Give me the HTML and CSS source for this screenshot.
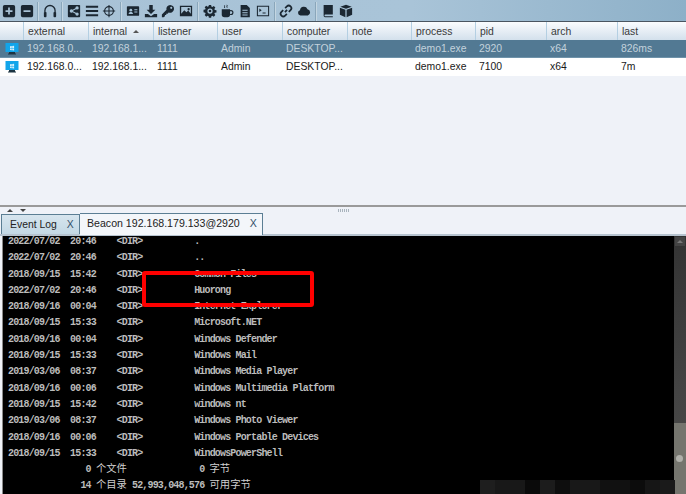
FILE: index.html
```html
<!DOCTYPE html>
<html lang="en">
<head>
  <meta charset="UTF-8" />
  <title>Cobalt Strike</title>
  <link rel="stylesheet" href="styles.css">
</head>
<body>
  <div class="toolbar">
    <span class="tool"><svg viewBox="0 0 16 16"><path d="M3 1h10a2 2 0 0 1 2 2v10a2 2 0 0 1-2 2H3a2 2 0 0 1-2-2V3a2 2 0 0 1 2-2zm4 3v3H4v2h3v3h2V9h3V7H9V4z" fill-rule="evenodd"/></svg></span>
    <span class="tool"><svg viewBox="0 0 16 16"><path d="M3 1h10a2 2 0 0 1 2 2v10a2 2 0 0 1-2 2H3a2 2 0 0 1-2-2V3a2 2 0 0 1 2-2zm1 6v2h8V7z" fill-rule="evenodd"/></svg></span>
    <span class="sep"></span>
    <span class="tool"><svg viewBox="0 0 16 16"><path d="M2.2 9.5V7.5a5.8 5.8 0 0 1 11.6 0v2" fill="none" stroke="#1b2732" stroke-width="1.5"/><rect x="1" y="9" width="3" height="6" rx="1"/><rect x="12" y="9" width="3" height="6" rx="1"/></svg></span>
    <span class="sep"></span>
    <span class="tool"><svg viewBox="0 0 16 16"><path d="M2 1h12a1 1 0 0 1 1 1v12a1 1 0 0 1-1 1H2a1 1 0 0 1-1-1V2a1 1 0 0 1 1-1z"/><path d="M11.5 4.5 5 8l6.500 3.500" fill="none" stroke="#a5c1d5" stroke-width="1.200"/><circle cx="11.500" cy="4.500" r="1.900" fill="#a5c1d5"/><circle cx="5" cy="8" r="1.900" fill="#a5c1d5"/><circle cx="11.500" cy="11.500" r="1.900" fill="#a5c1d5"/></svg></span>
    <span class="tool"><svg viewBox="0 0 16 16"><path d="M1 2h14v2.400H1zM1 6.800h14v2.400H1zM1 11.600h14V14H1z"/></svg></span>
    <span class="tool"><svg viewBox="0 0 16 16"><circle cx="8" cy="8" r="5" fill="none" stroke="#1b2732" stroke-width="1.300"/><path d="M7.400 1h1.200v14H7.400zM1 7.400h14v1.200H1z"/></svg></span>
    <span class="sep"></span>
    <span class="tool"><svg viewBox="0 0 16 16"><path d="M2 2.500h12a1 1 0 0 1 1 1v9a1 1 0 0 1-1 1H2a1 1 0 0 1-1-1v-9a1 1 0 0 1 1-1z"/><circle cx="5.500" cy="7" r="1.600" fill="#a5c1d5"/><path d="M3 11.500c0-3 5-3 5 0zM9.500 6H13v1.200H9.500zM9.500 8.500H13v1.200H9.500z" fill="#a5c1d5"/></svg></span>
    <span class="tool"><svg viewBox="0 0 16 16"><path d="M6 1h4v5.500h3L8 11.500 3 6.500h3zM1 11.500h3.500L8 14l3.500-2.500H15V15H1z"/></svg></span>
    <span class="tool"><svg viewBox="0 0 16 16"><path d="M10.500 1a4.500 4.500 0 1 1-1.700 8.700L7.500 11H6v1.500H4.500V14L3 15H1v-3l5.300-5.300A4.500 4.500 0 0 1 10.500 1zm1.200 2.200a1.200 1.200 0 1 0 0 2.400 1.200 1.200 0 0 0 0-2.400z" fill-rule="evenodd"/></svg></span>
    <span class="tool"><svg viewBox="0 0 16 16"><path d="M1 2h14v12H1zm1.500 1.500v7.500l3.500-4 2.500 2.500 2-2 3 3.500V3.500z" fill-rule="evenodd"/><circle cx="11" cy="6" r="1.300"/></svg></span>
    <span class="sep"></span>
    <span class="tool"><svg viewBox="0 0 16 16"><path d="M6.700 1h2.600l.3 1.900 1.100.5 1.600-1.100 1.800 1.800-1.100 1.600.5 1.100 1.900.3v2.600l-1.900.3-.5 1.100 1.100 1.600-1.800 1.800-1.600-1.100-1.100.5-.3 1.900H6.700l-.3-1.900-1.100-.5-1.600 1.100-1.800-1.800 1.100-1.600-.5-1.100L.6 9.300V6.700l1.900-.3.5-1.100-1.100-1.600 1.800-1.800 1.600 1.100 1.100-.5zM8 5a3 3 0 1 0 0 6 3 3 0 0 0 0-6z" fill-rule="evenodd"/><circle cx="8" cy="8" r="1.500"/></svg></span>
    <span class="tool"><svg viewBox="0 0 16 16"><path d="M2 6h9.500v6a3 3 0 0 1-3 3h-3.500a3 3 0 0 1-3-3z"/><path d="M11.500 7.500h1a1.800 1.800 0 0 1 0 4.500h-1" fill="none" stroke="#1b2732" stroke-width="1.300"/><path d="M5 1.500c1 .8-.6 1.600.4 3M7.800 1c1 .8-.6 1.700.4 3.200" fill="none" stroke="#1b2732" stroke-width="1.100"/></svg></span>
    <span class="tool"><svg viewBox="0 0 16 16"><path d="M3 1h7l3.500 3.500V15H3zm2 5.500v1.200h6V6.500zm0 2.800v1.200h6V9.300zm0 2.700v1.200h6V12z" fill-rule="evenodd"/></svg></span>
    <span class="tool"><svg viewBox="0 0 16 16"><path d="M1 2h14v12H1zm1.200 1.200v9.600h11.600V3.200z" fill-rule="evenodd"/><path d="m3.800 5.200 2.700 2-2.700 2zM7.500 9.800h3.500v1H7.500z"/></svg></span>
    <span class="sep"></span>
    <span class="tool"><svg viewBox="0 0 16 16"><path d="m6.800 9.200 2.400-2.400M7 4.800l2-2a2.900 2.900 0 0 1 4.200 4.200l-2 2M9 11.200l-2 2A2.900 2.900 0 0 1 2.800 9l2-2" fill="none" stroke="#1b2732" stroke-width="2"/></svg></span>
    <span class="tool"><svg viewBox="0 0 16 16"><path d="M4 13a3 3 0 0 1-.6-5.900A4.500 4.500 0 0 1 12 6a3.600 3.600 0 0 1 .4 7z"/></svg></span>
    <span class="sep"></span>
    <span class="tool"><svg viewBox="0 0 16 16"><path d="M3 1h10.500v11H5a1 1 0 0 0 0 2h8.500v1H4.500A1.800 1.800 0 0 1 3 13.300z"/></svg></span>
    <span class="tool"><svg viewBox="0 0 16 16"><path d="M8 .8 14.500 3 8 5.400 1.500 3zM1 4.200l6.300 2.300V15L1 12.300zM15 4.200 8.700 6.500V15l6.300-2.700z"/></svg></span>
  </div>

  <div class="sessions">
    <div class="row head">
      <span></span><span>external</span><span>internal<i class="sort-arrow"></i></span><span>listener</span><span>user</span><span>computer</span><span>note</span><span>process</span><span>pid</span><span>arch</span><span>last</span>
    </div>
    <div class="row selected">
      <span class="os"><svg viewBox="0 0 14 14"><rect x="0.500" y="1" width="13" height="9" fill="#12a5ea"/><path d="M5 4.200 6.800 4v2H5zM7.200 4l1.900-.3V6H7.200zM5 6.400h1.800v1.800L5 8zM7.200 6.400h1.900v2.100l-1.900-.3z" fill="#d5f0fc"/><path d="M4 10h6v1.500H11v1H3v-1h1z" fill="#1c3442"/></svg></span>
      <span>192.168.0...</span><span>192.168.1...</span><span>1111</span><span>Admin</span><span>DESKTOP...</span><span></span><span>demo1.exe</span><span>2920</span><span>x64</span><span>826ms</span>
    </div>
    <div class="row">
      <span class="os"><svg viewBox="0 0 14 14"><rect x="0.500" y="1" width="13" height="9" fill="#12a5ea"/><path d="M5 4.200 6.800 4v2H5zM7.200 4l1.900-.3V6H7.200zM5 6.400h1.800v1.800L5 8zM7.200 6.400h1.900v2.100l-1.900-.3z" fill="#d5f0fc"/><path d="M4 10h6v1.500H11v1H3v-1h1z" fill="#1c3442"/></svg></span>
      <span>192.168.0...</span><span>192.168.1...</span><span>1111</span><span>Admin</span><span>DESKTOP...</span><span></span><span>demo1.exe</span><span>7100</span><span>x64</span><span>7m</span>
    </div>
  </div>

  <div class="splitter">
    <span class="split-arrows"><i class="up"></i><i class="down"></i></span>
    <span class="split-grip"></span>
  </div>

  <div class="tabs">
    <div class="tab">Event Log <b>X</b></div>
    <div class="tab active">Beacon 192.168.179.133@2920 <b>X</b></div>
  </div>

  <div class="console">
    <div class="output">
      <pre class="listing">2022/07/02  20:46    &lt;DIR&gt;          .
2022/07/02  20:46    &lt;DIR&gt;          ..
2018/09/15  15:42    &lt;DIR&gt;          Common Files
2022/07/02  20:46    &lt;DIR&gt;          Huorong
2018/09/16  00:04    &lt;DIR&gt;          Internet Explorer
2018/09/15  15:33    &lt;DIR&gt;          Microsoft.NET
2018/09/16  00:04    &lt;DIR&gt;          Windows Defender
2018/09/15  15:33    &lt;DIR&gt;          Windows Mail
2019/03/06  08:37    &lt;DIR&gt;          Windows Media Player
2018/09/16  00:06    &lt;DIR&gt;          Windows Multimedia Platform
2018/09/15  15:42    &lt;DIR&gt;          windows nt
2019/03/06  08:37    &lt;DIR&gt;          Windows Photo Viewer
2018/09/16  00:06    &lt;DIR&gt;          Windows Portable Devices
2018/09/15  15:33    &lt;DIR&gt;          WindowsPowerShell</pre>
      <pre class="listing">               0 <span class="cn">个文件</span>              0 <span class="cn">字节</span></pre>
      <pre class="listing">              14 <span class="cn">个目录</span> 52,993,048,576 <span class="cn">可用字节</span></pre>
    </div>
    <div class="scrollbar">
      <span class="scroll-btn"></span>
      <span class="scroll-thumb"></span>
    </div>
    <div class="mosaic"></div>
    <div class="redbox"></div>
  </div>
</body>
</html>
```

FILE: styles.css
```css
* {
  box-sizing: border-box;
}

html, body {
  margin: 0;
  padding: 0;
  height: 100%;
  overflow: hidden;
}

body {
  display: flex;
  flex-direction: column;
  background: #eff2f8;
  color: #1a1a1a;
  font-family: "Liberation Sans", Arial, sans-serif;
  font-size: 10.4px;
}

.toolbar {
  display: flex;
  align-items: center;
  height: 22px;
  flex: none;
  padding-top: 1px;
  background: linear-gradient(90deg, #a8c2d6, #a9c4d8 60%, #8db0c8);
  border-bottom: 1px solid #4a5560;
}

.tool {
  display: flex;
  justify-content: center;
  width: 17.7px;
}

.tool svg {
  width: 14px;
  height: 14px;
  fill: #1b2732;
}

.sep {
  width: 6px;
  height: 19px;
  background: linear-gradient(90deg, transparent 2px, #8aa6ba 2px, #8aa6ba 3px, #c4d6e2 3px, #c4d6e2 4px, transparent 4px);
}

.sessions {
  flex: none;
  height: 185px;
  border-bottom: 2px solid #9a9a9a;
}

.row {
  display: grid;
  grid-template-columns: 23px 65px 65px 64px 65px 65px 64px 64px 71px 71px 69px;
  height: 18px;
  align-items: center;
  background: #fff;
}

.row span {
  padding-left: 4px;
  white-space: nowrap;
  overflow: hidden;
  line-height: 18px;
}

.head {
  background: linear-gradient(180deg, #fafcfe, #d3e0ec);
  color: #3a3a3a;
}

.head span {
  height: 18px;
  line-height: 20px;
  border-left: 1px solid #b4cfe2;
}

.head span:first-child {
  border-left: 0;
}

.sort-arrow {
  display: inline-block;
  vertical-align: 2px;
  margin-left: 6px;
  border-left: 3px solid transparent;
  border-right: 3px solid transparent;
  border-bottom: 3px solid #555;
}

.selected {
  background: #527993;
  color: #c3d2dc;
  border-bottom: 1px solid #6f93aa;
}

.row .os {
  padding-left: 5px;
  display: flex;
  align-items: center;
}

.os svg {
  width: 14px;
  height: 14px;
}

.splitter {
  flex: none;
  height: 6px;
  display: flex;
  align-items: center;
  position: relative;
  background: #eff2f8;
}

.split-arrows {
  display: flex;
  gap: 7px;
  margin-left: 7px;
}

.split-arrows i {
  border-left: 3px solid transparent;
  border-right: 3px solid transparent;
}

.split-arrows .up {
  border-bottom: 3px solid #444;
}

.split-arrows .down {
  border-top: 3px solid #444;
}

.split-grip {
  width: 12px;
  height: 3px;
  margin-left: 312px;
  background: repeating-linear-gradient(90deg, #a9b4bd 0 1px, transparent 1px 2px);
}

.tabs {
  flex: none;
  height: 23px;
  display: flex;
  align-items: flex-end;
  padding-left: 1px;
  border-bottom: 2px solid #b6c3cf;
}

.tab {
  height: 20px;
  width: 79px;
  padding: 3px 0 0 8px;
  font-size: 10.4px;
  line-height: 14px;
  color: #222;
  background: linear-gradient(180deg, #d7e5ee, #c3d8e5);
  border: 1px solid #5b7e94;
  border-bottom: 0;
  white-space: nowrap;
}

.tab b {
  font-weight: 400;
  margin-left: 7px;
  color: #33506a;
}

.tab.active {
  height: 22px;
  width: 183px;
  margin-bottom: -1px;
  padding: 2px 0 0 7px;
  font-size: 10.6px;
  background: #f3f6fa;
  border-left: 0;
}

.console {
  flex: 1;
  position: relative;
  display: flex;
  overflow: hidden;
  margin-left: 3px;
  background: #000;
  box-shadow: -1px 0 0 #8a8a8a;
}

.output {
  flex: 1;
  margin-top: -2px;
  padding-left: 5px;
}

.listing {
  margin: 0;
  font-family: "Liberation Mono", "Noto Sans CJK SC", monospace;
  font-size: 10px;
  font-weight: 700;
  line-height: 16.3px;
  letter-spacing: -0.83px;
  color: #bcbcbc;
}

.cn {
  font-family: "Noto Sans CJK SC", sans-serif;
  font-size: 10.3px;
  font-weight: 400;
  line-height: 0;
  letter-spacing: 0;
  color: #d0d0d0;
}

.scrollbar {
  flex: none;
  width: 12px;
  display: flex;
  flex-direction: column;
  background: linear-gradient(180deg, #333 0, #444 60%, #4a4a48 100%);
}

.scroll-btn {
  height: 11px;
  background: #444;
  border: 1px solid #333;
  position: relative;
}

.scroll-btn::after {
  content: "";
  position: absolute;
  left: 2px;
  top: 3px;
  border-left: 3px solid transparent;
  border-right: 3px solid transparent;
  border-bottom: 3px solid #777;
}

.scroll-thumb {
  margin-top: auto;
  height: 71px;
  position: relative;
  background: #75756e;
}

.scroll-thumb::after {
  content: "";
  position: absolute;
  left: 2px;
  top: 32px;
  width: 7px;
  height: 7px;
  border-radius: 50%;
  background: #b0b0aa;
}

.mosaic {
  position: absolute;
  left: 477px;
  right: 11px;
  bottom: 0;
  height: 14px;
  background: linear-gradient(90deg, #1e1e1e 0 15px, #181818 15px 45px, #0a0a0a 45px 60px, #1c1c1c 60px 75px, #0e0e0e 75px 90px, #181818 90px 120px, #111 120px 150px, #0c0c0c 150px 165px, #161616 165px 180px, #1a1a1a 180px);
}

.redbox {
  position: absolute;
  left: 139px;
  top: 35px;
  width: 172px;
  height: 36px;
  border: 4px solid #f00;
  border-radius: 3px;
}
```
